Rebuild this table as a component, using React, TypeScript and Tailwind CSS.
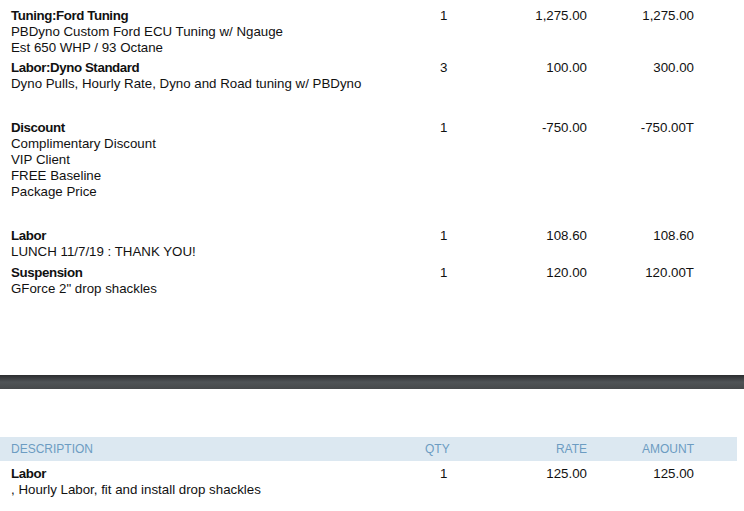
import React from 'react';

type Line = {
  title: string;
  lines: string[];
  qty: string;
  rate: string;
  amount: string;
  gap: string;
};

// invoice lines above the page break
const TOP_LINES: Line[] = [
  {
    title: 'Tuning:Ford Tuning',
    lines: ['PBDyno Custom Ford ECU Tuning w/ Ngauge', 'Est 650 WHP / 93 Octane'],
    qty: '1',
    rate: '1,275.00',
    amount: '1,275.00',
    gap: 'mt-0',
  },
  {
    title: 'Labor:Dyno Standard',
    lines: ['Dyno Pulls, Hourly Rate, Dyno and Road tuning w/ PBDyno'],
    qty: '3',
    rate: '100.00',
    amount: '300.00',
    gap: 'mt-[4px]',
  },
  {
    title: 'Discount',
    lines: ['Complimentary Discount', 'VIP Client', 'FREE Baseline', 'Package Price'],
    qty: '1',
    rate: '-750.00',
    amount: '-750.00T',
    gap: 'mt-[28px]',
  },
  {
    title: 'Labor',
    lines: ['LUNCH 11/7/19 : THANK YOU!'],
    qty: '1',
    rate: '108.60',
    amount: '108.60',
    gap: 'mt-[28px]',
  },
  {
    title: 'Suspension',
    lines: ['GForce 2" drop shackles'],
    qty: '1',
    rate: '120.00',
    amount: '120.00T',
    gap: 'mt-[5px]',
  },
];

const cols = 'grid grid-cols-[414px_75px_87px_107px]';

const Row: React.FC<{ item: Line }> = ({ item }) => (
  <div className={`${cols} ${item.gap} text-[13.3px] leading-4 text-[#111]`}>
    <div>
      <div className="font-bold tracking-[-0.4px]">{item.title}</div>
      {item.lines.map((l) => (
        <div key={l}>{l}</div>
      ))}
    </div>
    <div className="pl-[15px]">{item.qty}</div>
    <div className="text-right">{item.rate}</div>
    <div className="text-right">{item.amount}</div>
  </div>
);

export default function App() {
  return (
    <div
      className="w-[744px] h-[511px] overflow-hidden bg-white"
      style={{ fontFamily: '"Liberation Sans", Arial, sans-serif' }}
    >
      <div className="pt-[8px] pl-[11px] h-[375px]">
        {TOP_LINES.map((item) => (
          <Row key={item.title + item.rate} item={item} />
        ))}
      </div>

      {/* page break bar */}
      <div className="h-[14px] bg-gradient-to-b from-[#2b2d2f] via-[#4f5356] to-[#46494b]" />

      <div className="pt-[48px]">
        <div className="w-[737px] h-[24px] bg-[#dce8f1] pl-[11px] flex items-center">
          <div className={`${cols} text-[12px] text-[#6c9cc2] w-full -mt-[1px]`}>
            <div>DESCRIPTION</div>
            <div>QTY</div>
            <div className="text-right">RATE</div>
            <div className="text-right">AMOUNT</div>
          </div>
        </div>
        <div className="pl-[11px] pt-[5px]">
          <Row
            item={{
              title: 'Labor',
              lines: [', Hourly Labor, fit and install drop shackles'],
              qty: '1',
              rate: '125.00',
              amount: '125.00',
              gap: 'mt-0',
            }}
          />
        </div>
      </div>
    </div>
  );
}
